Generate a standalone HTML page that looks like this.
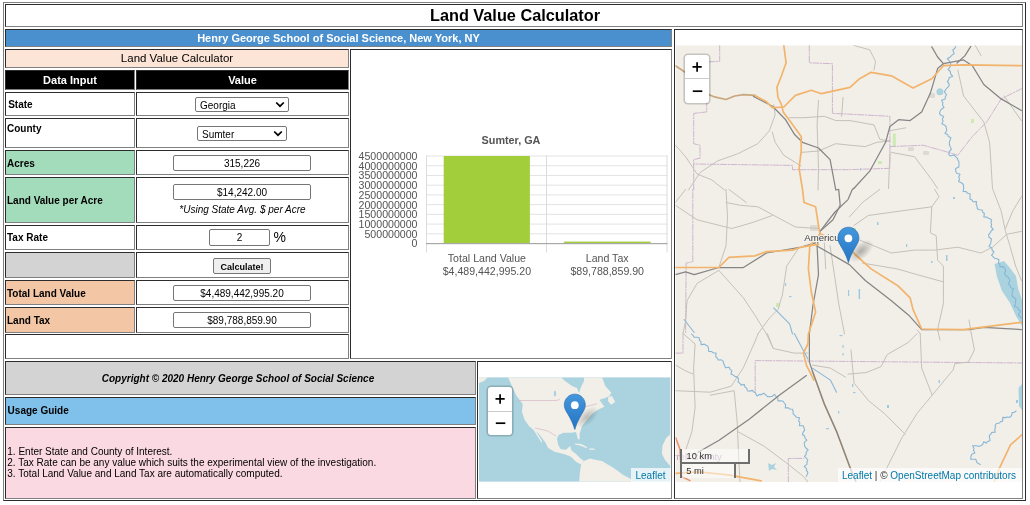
<!DOCTYPE html>
<html><head><meta charset="utf-8">
<style>
html,body{margin:0;padding:0;background:#fff;width:1030px;height:505px;overflow:hidden;}
body{font-family:"Liberation Sans",sans-serif;position:relative;color:#000;}
.a{position:absolute;box-sizing:border-box;}
.c{position:absolute;box-sizing:border-box;border:1px inset grey;}
.t{position:absolute;white-space:nowrap;line-height:1;}
.inp{position:absolute;box-sizing:border-box;border:1px solid #767676;border-radius:2px;background:#fff;}
</style></head><body><div id="wrap" style="position:absolute;left:0;top:0;width:1030px;height:505px;filter:blur(0.3px)">
<!-- outer table -->
<div class="a" style="left:3px;top:2px;width:1023px;height:499px;border:1px outset grey;"></div>

<!-- title -->
<div class="c" style="left:5px;top:4px;width:1018px;height:23px;"></div>
<div class="t" style="left:0;width:1030px;text-align:center;top:7px;font-weight:bold;font-size:16.3px;">Land Value Calculator</div>

<!-- blue header -->
<div class="c" style="left:5px;top:29px;width:667px;height:18px;background:#4a8fce;"></div>
<div class="t" style="left:5px;width:667px;text-align:center;top:33.2px;font-weight:bold;font-size:11px;color:#fff;">Henry George School of Social Science, New York, NY</div>

<!-- map cell -->
<div class="c" style="left:674px;top:29px;width:349px;height:470px;"></div>

<!-- peach -->
<div class="c" style="left:5px;top:49px;width:344px;height:19px;background:#fce4d6;"></div>
<div class="t" style="left:5px;width:344px;text-align:center;top:52.6px;font-size:11.5px;">Land Value Calculator</div>

<!-- chart cell -->
<div class="c" style="left:350px;top:49px;width:322px;height:310px;"></div>

<!-- black header -->
<div class="c" style="left:5px;top:70px;width:130px;height:20px;background:#000;"></div>
<div class="c" style="left:136px;top:70px;width:213px;height:20px;background:#000;"></div>
<div class="t" style="left:5px;width:130px;text-align:center;top:75.0px;font-weight:bold;font-size:11px;color:#fff;">Data Input</div>
<div class="t" style="left:136px;width:213px;text-align:center;top:75.0px;font-weight:bold;font-size:11px;color:#fff;">Value</div>

<!-- rows -->
<div class="c" style="left:5px;top:92px;width:130px;height:24px;"></div>
<div class="c" style="left:136px;top:92px;width:213px;height:24px;"></div>
<div class="t" style="left:8.2px;top:99.6px;font-weight:bold;font-size:10px;">State</div>

<div class="c" style="left:5px;top:118px;width:130px;height:30px;"></div>
<div class="c" style="left:136px;top:118px;width:213px;height:30px;"></div>
<div class="t" style="left:7px;top:124.1px;font-weight:bold;font-size:10px;">County</div>

<div class="c" style="left:5px;top:150px;width:130px;height:25px;background:#a3dcbb;"></div>
<div class="c" style="left:136px;top:150px;width:213px;height:25px;"></div>
<div class="t" style="left:7px;top:158.5px;font-weight:bold;font-size:10px;">Acres</div>

<div class="c" style="left:5px;top:177px;width:130px;height:46px;background:#a3dcbb;"></div>
<div class="c" style="left:136px;top:177px;width:213px;height:46px;"></div>
<div class="t" style="left:7px;top:195.8px;font-weight:bold;font-size:10px;">Land Value per Acre</div>

<div class="c" style="left:5px;top:225px;width:130px;height:25px;"></div>
<div class="c" style="left:136px;top:225px;width:213px;height:25px;"></div>
<div class="t" style="left:7px;top:233.3px;font-weight:bold;font-size:10px;">Tax Rate</div>

<div class="c" style="left:5px;top:252px;width:130px;height:26px;background:#d3d3d3;"></div>
<div class="c" style="left:136px;top:252px;width:213px;height:26px;"></div>

<div class="c" style="left:5px;top:280px;width:130px;height:25px;background:#f3c6a5;"></div>
<div class="c" style="left:136px;top:280px;width:213px;height:25px;"></div>
<div class="t" style="left:7px;top:288.6px;font-weight:bold;font-size:10px;">Total Land Value</div>

<div class="c" style="left:5px;top:307px;width:130px;height:26px;background:#f3c6a5;"></div>
<div class="c" style="left:136px;top:307px;width:213px;height:26px;"></div>
<div class="t" style="left:7px;top:315.9px;font-weight:bold;font-size:10px;">Land Tax</div>

<div class="c" style="left:5px;top:334px;width:344px;height:25px;"></div>


<!-- chart -->
<svg class="a" style="left:0;top:0" width="1030" height="505" viewBox="0 0 1030 505">
<rect x="426" y="155.50" width="241.5" height="1" fill="#e3e3e3"/>
<rect x="426" y="165.22" width="241.5" height="1" fill="#e3e3e3"/>
<rect x="426" y="174.94" width="241.5" height="1" fill="#e3e3e3"/>
<rect x="426" y="184.67" width="241.5" height="1" fill="#e3e3e3"/>
<rect x="426" y="194.39" width="241.5" height="1" fill="#e3e3e3"/>
<rect x="426" y="204.11" width="241.5" height="1" fill="#e3e3e3"/>
<rect x="426" y="213.83" width="241.5" height="1" fill="#e3e3e3"/>
<rect x="426" y="223.56" width="241.5" height="1" fill="#e3e3e3"/>
<rect x="426" y="233.28" width="241.5" height="1" fill="#e3e3e3"/>
<rect x="426.0" y="155.5" width="1" height="97" fill="#dcdcdc"/>
<rect x="546.0" y="155.5" width="1" height="97" fill="#dcdcdc"/>
<rect x="666.5" y="155.5" width="1" height="97" fill="#dcdcdc"/>
<rect x="443.7" y="156" width="86.2" height="87.5" fill="#a1ce3a"/>
<rect x="563.9" y="241.6" width="86.7" height="1.9" fill="#a1ce3a"/>
<rect x="426" y="243.00" width="241.5" height="1.2" fill="#a8a8a8"/>
<text x="417.5" y="159.90" text-anchor="end" font-family="Liberation Sans" font-size="10.6" fill="#545454">4500000000</text>
<text x="417.5" y="169.62" text-anchor="end" font-family="Liberation Sans" font-size="10.6" fill="#545454">4000000000</text>
<text x="417.5" y="179.34" text-anchor="end" font-family="Liberation Sans" font-size="10.6" fill="#545454">3500000000</text>
<text x="417.5" y="189.07" text-anchor="end" font-family="Liberation Sans" font-size="10.6" fill="#545454">3000000000</text>
<text x="417.5" y="198.79" text-anchor="end" font-family="Liberation Sans" font-size="10.6" fill="#545454">2500000000</text>
<text x="417.5" y="208.51" text-anchor="end" font-family="Liberation Sans" font-size="10.6" fill="#545454">2000000000</text>
<text x="417.5" y="218.23" text-anchor="end" font-family="Liberation Sans" font-size="10.6" fill="#545454">1500000000</text>
<text x="417.5" y="227.96" text-anchor="end" font-family="Liberation Sans" font-size="10.6" fill="#545454">1000000000</text>
<text x="417.5" y="237.68" text-anchor="end" font-family="Liberation Sans" font-size="10.6" fill="#545454">500000000</text>
<text x="417.5" y="247.40" text-anchor="end" font-family="Liberation Sans" font-size="10.6" fill="#545454">0</text>
<text x="511" y="143.8" text-anchor="middle" font-family="Liberation Sans" font-weight="bold" font-size="10.8" fill="#545454">Sumter, GA</text>
<text x="486.9" y="261.8" text-anchor="middle" font-family="Liberation Sans" font-size="10.6" fill="#545454">Total Land Value</text>
<text x="486.9" y="274.7" text-anchor="middle" font-family="Liberation Sans" font-size="10.6" fill="#545454">$4,489,442,995.20</text>
<text x="607.2" y="261.8" text-anchor="middle" font-family="Liberation Sans" font-size="10.6" fill="#545454">Land Tax</text>
<text x="607.2" y="274.7" text-anchor="middle" font-family="Liberation Sans" font-size="10.6" fill="#545454">$89,788,859.90</text>
</svg>
<!-- controls -->
<div class="inp" style="left:195px;top:97px;width:94px;height:15px;"></div>
<div class="t" style="left:200px;top:100.9px;font-size:10px;">Georgia</div>
<svg class="a" style="left:275px;top:101px;" width="10" height="7" viewBox="0 0 10 7"><polyline points="1.2,1.5 5,5.2 8.8,1.5" fill="none" stroke="#000" stroke-width="1.7"/></svg>
<div class="inp" style="left:197px;top:126px;width:90px;height:15px;"></div>
<div class="t" style="left:202px;top:129.9px;font-size:10px;">Sumter</div>
<svg class="a" style="left:273px;top:130px;" width="10" height="7" viewBox="0 0 10 7"><polyline points="1.2,1.5 5,5.2 8.8,1.5" fill="none" stroke="#000" stroke-width="1.7"/></svg>

<div class="inp" style="left:173px;top:155px;width:138px;height:16px;"></div>
<div class="t" style="left:173px;width:138px;text-align:center;top:158.8px;font-size:10px;">315,226</div>
<div class="inp" style="left:173px;top:184px;width:138px;height:16px;"></div>
<div class="t" style="left:173px;width:138px;text-align:center;top:187.8px;font-size:10px;">$14,242.00</div>
<div class="t" style="left:136px;width:213px;text-align:center;top:204.8px;font-size:10px;font-style:italic;">*Using State Avg. $ per Acre</div>

<div class="inp" style="left:209px;top:229px;width:61px;height:17px;"></div>
<div class="t" style="left:209px;width:61px;text-align:center;top:233.2px;font-size:10px;">2</div>
<div class="t" style="left:273.6px;top:230.2px;font-size:14px;">%</div>

<div class="a" style="left:213px;top:258px;width:58px;height:16px;border:1px solid #767676;border-radius:2px;background:#efefef;"></div>
<div class="t" style="left:213px;width:58px;text-align:center;top:262.5px;font-size:9px;font-weight:bold;">Calculate!</div>

<div class="inp" style="left:173px;top:285px;width:138px;height:16px;"></div>
<div class="t" style="left:173px;width:138px;text-align:center;top:289.3px;font-size:10px;">$4,489,442,995.20</div>
<div class="inp" style="left:173px;top:312px;width:138px;height:16px;"></div>
<div class="t" style="left:173px;width:138px;text-align:center;top:316.1px;font-size:10px;">$89,788,859.90</div>





















<!-- bigmap -->
<svg class="a" style="left:0;top:0" width="1030" height="505" viewBox="0 0 1030 505">
<defs><clipPath id="bmc"><rect x="675.5" y="45.3" width="346.5" height="436.7"/></clipPath><radialGradient id="shd" cx="0.5" cy="0.5" r="0.5"><stop offset="0" stop-color="#000" stop-opacity="0.28"/><stop offset="1" stop-color="#000" stop-opacity="0"/></radialGradient><linearGradient id="mk" x1="0" y1="0" x2="0" y2="1"><stop offset="0" stop-color="#4597dc"/><stop offset="1" stop-color="#2374c4"/></linearGradient></defs>
<g clip-path="url(#bmc)">
<rect x="675.5" y="45.3" width="346.5" height="436.7" fill="#f2efe9"/>
<polygon points="994.5,264 1004,261 1010,268 1016,276 1018,288 1022,300 1022,326 1016,316 1010,303 1002,291 997,277" fill="#aad3df"/>
<polygon points="1018.5,388 1022,384 1022,410 1019,406" fill="#aad3df"/>
<rect x="929" y="93" width="6" height="5" fill="#ddd9d3" rx="1"/>
<rect x="908" y="147" width="6" height="4" fill="#ddd9d3" rx="1"/>
<rect x="923" y="151" width="6" height="4" fill="#ddd9d3" rx="1"/>
<rect x="810" y="225" width="8" height="6" fill="#ddd9d3" rx="1"/>
<rect x="892.8" y="133.6" width="3" height="13" fill="#cdebb0"/>
<rect x="971" y="119" width="3" height="4" fill="#cdebb0"/>
<rect x="878" y="161" width="4" height="3" fill="#cdebb0"/>
<rect x="776" y="303" width="4" height="4" fill="#cdebb0"/>
<rect x="851" y="228" width="5" height="7" fill="#cdebb0"/>
<circle cx="939.9" cy="91.7" r="3.5" fill="#aad3df"/>
<rect x="839.5" y="335" width="3" height="1.2" fill="#9ecae0"/>
<rect x="842.5" y="345" width="1.2" height="3" fill="#9ecae0"/>
<rect x="842.5" y="353" width="1.2" height="2.5" fill="#9ecae0"/>
<rect x="852" y="384" width="1.3" height="3" fill="#9ecae0"/>
<rect x="853" y="392" width="2.5" height="1.2" fill="#9ecae0"/>
<rect x="826" y="428" width="3" height="1.2" fill="#9ecae0"/>
<rect x="838" y="411" width="1.3" height="2.5" fill="#9ecae0"/>
<rect x="887" y="405" width="2" height="3" fill="#9ecae0"/>
<rect x="938.5" y="380" width="1.5" height="3" fill="#9ecae0"/>
<rect x="1016" y="400" width="2" height="3" fill="#9ecae0"/>
<rect x="785" y="283" width="1.2" height="3" fill="#9ecae0"/>
<rect x="789" y="296" width="2.5" height="1.2" fill="#9ecae0"/>
<rect x="848" y="290" width="1.2" height="6" fill="#9ecae0"/>
<rect x="858.6" y="289" width="1.5" height="10" fill="#9ecae0"/>
<rect x="946" y="255" width="1.5" height="6" fill="#9ecae0"/>
<rect x="877" y="222" width="1.5" height="3" fill="#9ecae0"/>
<rect x="953" y="197" width="2" height="2" fill="#9ecae0"/>
<rect x="906" y="244" width="1.2" height="3" fill="#9ecae0"/>
<rect x="931" y="261" width="1.5" height="2" fill="#9ecae0"/>
<rect x="860" y="168" width="1.2" height="2.5" fill="#9ecae0"/>
<rect x="801" y="137" width="1.2" height="2.5" fill="#9ecae0"/>
<path d="M768,463 l4,2 l4,-2 l-2,4 l3,3 l-5,-1 l-3,2 z" fill="#aad3df"/>
<text x="668" y="459.5" font-family="Liberation Sans" font-size="9.5" fill="#b79bbd">errell County</text>
<polyline points="719.7,45.4 719.7,61.3 708.7,61.9" fill="none" stroke="#cdb5cd" stroke-width="1.0" stroke-linejoin="round" stroke-linecap="round" stroke-dasharray="6,1.5,1.5,1.5"/>
<polyline points="706.7,100.4 706.7,111.9 693.7,113.4 693.7,143.7 700.0,145.2 700.0,158.2 693.7,159.6 693.7,190.0 692.8,189.4 692.8,261.7 686.1,263.1 685.6,334.0" fill="none" stroke="#cdb5cd" stroke-width="1.0" stroke-linejoin="round" stroke-linecap="round" stroke-dasharray="6,1.5,1.5,1.5"/>
<polyline points="809.3,45.4 809.3,62.8 832.4,63.7 832.4,113.4 850.0,114.2 889.9,116.3 889.9,168.3 848.0,169.7 792.5,169.7 792.5,165.4 693.7,164.0" fill="none" stroke="#cdb5cd" stroke-width="1.0" stroke-linejoin="round" stroke-linecap="round" stroke-dasharray="6,1.5,1.5,1.5"/>
<polyline points="889.9,146.6 923.1,145.2 943.4,150.9 957.8,155.3 972.3,136.5 986.7,122.0 1001.2,98.9 1021.4,88.8" fill="none" stroke="#cdb5cd" stroke-width="1.0" stroke-linejoin="round" stroke-linecap="round" stroke-dasharray="6,1.5,1.5,1.5"/>
<polyline points="683.0,333.5 683.0,353.1 675.5,353.1" fill="none" stroke="#cdb5cd" stroke-width="1.0" stroke-linejoin="round" stroke-linecap="round" stroke-dasharray="6,1.5,1.5,1.5"/>
<polyline points="755.2,392.2 755.2,360.6 1022.5,363.0" fill="none" stroke="#cdb5cd" stroke-width="1.0" stroke-linejoin="round" stroke-linecap="round" stroke-dasharray="6,1.5,1.5,1.5"/>
<polyline points="788.3,482.4 788.3,458.4 803.4,458.4" fill="none" stroke="#cdb5cd" stroke-width="1.0" stroke-linejoin="round" stroke-linecap="round" stroke-dasharray="6,1.5,1.5,1.5"/>
<polyline points="773.7,104.7 775.2,114.8 769.4,130.7 757.8,143.7 737.6,153.8 717.4,161.0 700.0,172.6 688.5,190.0" fill="none" stroke="#c4c0ba" stroke-width="1.0" stroke-linejoin="round" stroke-linecap="round" />
<polyline points="772.3,132.2 775.2,142.3 783.8,155.3 795.4,162.5 801.0,166.0" fill="none" stroke="#c4c0ba" stroke-width="1.0" stroke-linejoin="round" stroke-linecap="round" />
<polyline points="789.6,117.7 804.0,117.7 824.3,116.3 835.8,120.6 850.0,120.6 874.0,124.9 879.8,139.4 889.9,141.0" fill="none" stroke="#c4c0ba" stroke-width="1.0" stroke-linejoin="round" stroke-linecap="round" />
<polyline points="801.2,152.4 818.5,151.0 835.8,143.7 850.0,145.2 865.3,146.6 876.9,142.3 889.9,141.0" fill="none" stroke="#c4c0ba" stroke-width="1.0" stroke-linejoin="round" stroke-linecap="round" />
<polyline points="818.5,100.4 817.1,124.9 818.5,168.3 818.0,190.0" fill="none" stroke="#c4c0ba" stroke-width="1.0" stroke-linejoin="round" stroke-linecap="round" />
<polyline points="843.1,97.5 841.6,116.3" fill="none" stroke="#c4c0ba" stroke-width="1.0" stroke-linejoin="round" stroke-linecap="round" />
<polyline points="675.4,145.2 685.6,156.7 697.1,174.0 711.6,179.8 724.6,190.0" fill="none" stroke="#c4c0ba" stroke-width="1.0" stroke-linejoin="round" stroke-linecap="round" />
<polyline points="853.8,45.4 869.7,49.8 875.5,61.3 874.0,70.0" fill="none" stroke="#c4c0ba" stroke-width="1.0" stroke-linejoin="round" stroke-linecap="round" />
<polyline points="975.2,45.4 981.0,55.6" fill="none" stroke="#c4c0ba" stroke-width="1.0" stroke-linejoin="round" stroke-linecap="round" />
<polyline points="957.8,70.0 963.6,96.0 983.8,122.0 989.6,142.3 992.5,188.5 1001.2,211.1 1005.5,231.4 1009.9,245.8 1015.6,266.0 1021.4,280.5" fill="none" stroke="#c4c0ba" stroke-width="1.0" stroke-linejoin="round" stroke-linecap="round" />
<polyline points="889.9,130.7 905.8,127.8" fill="none" stroke="#c4c0ba" stroke-width="1.0" stroke-linejoin="round" stroke-linecap="round" />
<polyline points="888.5,188.5 889.9,153.8 891.4,152.4 914.5,156.7 931.8,179.8 937.6,188.5" fill="none" stroke="#c4c0ba" stroke-width="1.0" stroke-linejoin="round" stroke-linecap="round" />
<polyline points="1004.0,96.0 1021.4,120.6" fill="none" stroke="#c4c0ba" stroke-width="1.0" stroke-linejoin="round" stroke-linecap="round" />
<polyline points="726.0,189.4 727.5,216.9 726.0,245.8 718.8,267.5" fill="none" stroke="#c4c0ba" stroke-width="1.0" stroke-linejoin="round" stroke-linecap="round" />
<polyline points="675.4,205.3 697.1,219.8 731.8,228.5 752.0,222.7 772.3,215.5" fill="none" stroke="#c4c0ba" stroke-width="1.0" stroke-linejoin="round" stroke-linecap="round" />
<polyline points="726.0,202.5 740.5,205.3 757.8,206.8 795.4,227.0 818.5,228.5" fill="none" stroke="#c4c0ba" stroke-width="1.0" stroke-linejoin="round" stroke-linecap="round" />
<polyline points="728.9,189.4 746.3,202.5" fill="none" stroke="#c4c0ba" stroke-width="1.0" stroke-linejoin="round" stroke-linecap="round" />
<polyline points="718.8,270.4 743.4,297.8 754.9,315.2 766.5,334.0 773.3,348.5" fill="none" stroke="#c4c0ba" stroke-width="1.0" stroke-linejoin="round" stroke-linecap="round" />
<polyline points="718.8,270.4 697.1,283.4 687.0,300.7 685.6,321.0 683.0,333.5 695.1,344.0 693.6,368.1 695.1,407.2 692.0,431.3 686.0,449.3" fill="none" stroke="#c4c0ba" stroke-width="1.0" stroke-linejoin="round" stroke-linecap="round" />
<polyline points="798.3,248.7 786.7,266.0 782.4,294.9 778.0,309.4 769.4,318.1 757.8,334.0" fill="none" stroke="#c4c0ba" stroke-width="1.0" stroke-linejoin="round" stroke-linecap="round" />
<polyline points="830.1,245.8 834.4,274.7 838.7,303.6 844.5,334.0" fill="none" stroke="#c4c0ba" stroke-width="1.0" stroke-linejoin="round" stroke-linecap="round" />
<polyline points="824.3,242.9 825.7,268.9" fill="none" stroke="#c4c0ba" stroke-width="1.0" stroke-linejoin="round" stroke-linecap="round" />
<polyline points="685.6,189.4 675.4,202.5" fill="none" stroke="#c4c0ba" stroke-width="1.0" stroke-linejoin="round" stroke-linecap="round" />
<polyline points="859.6,240.0 891.4,253.0 914.5,250.1 934.7,250.1 957.8,247.2 981.0,253.0 992.5,247.2 1007.0,234.2 1021.4,231.4" fill="none" stroke="#c4c0ba" stroke-width="1.0" stroke-linejoin="round" stroke-linecap="round" />
<polyline points="934.7,189.4 939.0,196.7 931.8,206.8 930.4,232.8 936.2,235.7 937.6,260.3 943.4,266.0 943.4,303.6 937.6,329.6" fill="none" stroke="#c4c0ba" stroke-width="1.0" stroke-linejoin="round" stroke-linecap="round" />
<polyline points="853.8,225.6 868.2,215.5 900.0,211.1 931.8,206.8" fill="none" stroke="#c4c0ba" stroke-width="1.0" stroke-linejoin="round" stroke-linecap="round" />
<polyline points="862.5,263.1 897.1,268.9 917.4,274.7 943.4,281.9" fill="none" stroke="#c4c0ba" stroke-width="1.0" stroke-linejoin="round" stroke-linecap="round" />
<polyline points="1021.4,196.7 1012.7,211.1 1005.5,228.5" fill="none" stroke="#c4c0ba" stroke-width="1.0" stroke-linejoin="round" stroke-linecap="round" />
<polyline points="849.4,216.9 862.5,202.5 879.8,189.4" fill="none" stroke="#c4c0ba" stroke-width="1.0" stroke-linejoin="round" stroke-linecap="round" />
<polyline points="675.5,365.1 686.0,371.1 693.0,374.0" fill="none" stroke="#c4c0ba" stroke-width="1.0" stroke-linejoin="round" stroke-linecap="round" />
<polyline points="675.5,390.7 710.1,392.2 731.2,386.2 743.2,368.1 755.2,341.0 758.2,333.5" fill="none" stroke="#c4c0ba" stroke-width="1.0" stroke-linejoin="round" stroke-linecap="round" />
<polyline points="710.1,395.2 734.2,390.7 737.2,422.3 738.7,458.4 740.0,482.0" fill="none" stroke="#c4c0ba" stroke-width="1.0" stroke-linejoin="round" stroke-linecap="round" />
<polyline points="767.3,333.5 773.3,348.5 794.3,353.1 807.9,353.1" fill="none" stroke="#c4c0ba" stroke-width="1.0" stroke-linejoin="round" stroke-linecap="round" />
<polyline points="737.2,431.3 764.3,446.3 788.3,464.4 803.4,476.4 808.0,482.0" fill="none" stroke="#c4c0ba" stroke-width="1.0" stroke-linejoin="round" stroke-linecap="round" />
<polyline points="812.4,365.1 830.4,368.1 845.5,377.1" fill="none" stroke="#c4c0ba" stroke-width="1.0" stroke-linejoin="round" stroke-linecap="round" />
<polyline points="917.2,333.5 908.2,342.5 887.1,354.6 881.1,366.6 866.0,372.6 848.0,374.1" fill="none" stroke="#c4c0ba" stroke-width="1.0" stroke-linejoin="round" stroke-linecap="round" />
<polyline points="920.2,333.5 921.7,368.1 932.2,395.2 917.2,413.2 902.2,437.3 887.1,467.4 880.0,482.0" fill="none" stroke="#c4c0ba" stroke-width="1.0" stroke-linejoin="round" stroke-linecap="round" />
<polyline points="851.0,350.0 854.0,383.1 869.1,401.2 884.1,413.2 905.2,434.3" fill="none" stroke="#c4c0ba" stroke-width="1.0" stroke-linejoin="round" stroke-linecap="round" />
<polyline points="971.3,333.5 974.4,350.0 968.3,362.1 954.8,363.6 953.3,369.6 932.2,395.2" fill="none" stroke="#c4c0ba" stroke-width="1.0" stroke-linejoin="round" stroke-linecap="round" />
<polyline points="920.2,333.5 917.2,330.0" fill="none" stroke="#c4c0ba" stroke-width="1.0" stroke-linejoin="round" stroke-linecap="round" />
<polyline points="971.3,333.5 969.0,320.0" fill="none" stroke="#c4c0ba" stroke-width="1.0" stroke-linejoin="round" stroke-linecap="round" />
<polyline points="937.6,329.6 940.0,340.0" fill="none" stroke="#c4c0ba" stroke-width="1.0" stroke-linejoin="round" stroke-linecap="round" />
<polyline points="955.7,46.5 954.7,48.5 952.8,50.0 954.2,53.6 952.1,55.0 950.6,56.7 947.3,58.7 949.1,60.7 950.5,62.7 950.8,64.9 950.0,67.1 948.1,69.5 950.3,71.5 950.6,73.6 952.6,76.4 949.1,77.6 948.8,79.7 947.4,81.6 949.3,84.4 948.7,86.4 946.9,88.1 945.4,90.0 944.4,92.0 946.5,94.7 945.3,96.7 945.2,98.9 941.6,100.2 942.9,102.8 942.5,104.9 944.0,107.5 941.5,109.2 940.1,111.0 939.5,113.7 941.1,115.3 943.7,116.6 942.3,119.2 943.1,121.1 941.8,123.7 944.4,124.9 946.1,126.5 946.4,128.5 946.8,130.5 945.0,133.4 947.7,134.6 948.4,136.5 950.9,137.8 950.1,140.3 949.4,142.1 949.4,144.5 950.3,146.9 951.4,149.4 949.2,151.5 948.7,154.6 950.6,156.0 954.0,154.9 955.6,156.7 957.4,158.3 957.4,159.1 959.0,162.0 958.9,164.4 958.8,166.9 955.6,168.5 955.7,171.5 956.8,173.3 960.0,174.2 958.7,177.0 959.5,178.9 958.7,181.5 961.3,182.7 963.2,184.2 963.5,186.3 963.8,188.4 963.1,191.4 966.2,191.6 967.4,193.2 970.0,193.8 970.1,196.2 969.9,198.9 971.9,199.9 973.0,201.7 976.5,201.6 976.2,204.4 977.1,206.3 977.3,208.7 979.3,209.8 982.1,210.0 982.8,212.2 984.4,213.5 983.8,216.9 986.5,217.1 988.4,218.2 990.6,218.9 991.7,220.6 990.9,222.4 991.6,224.7 990.9,226.7 993.3,229.3 991.1,231.0 990.2,232.9 988.6,234.8 989.0,237.2 991.5,239.0 990.9,241.4 990.8,243.6 988.9,246.2 991.9,247.9 992.1,250.1 994.0,252.0 991.5,255.3 993.1,256.6 994.4,258.2 997.0,258.7 999.0,259.8 998.4,262.9 999.8,264.4 1000.0,266.9 1003.6,266.6 1004.9,268.5 1005.6,270.7 1004.5,273.5 1005.5,275.5 1007.9,277.0 1009.3,278.8 1009.8,281.0 1008.3,283.9 1010.1,285.5 1010.6,287.6 1013.7,288.9 1012.1,291.5 1012.4,293.6 1011.8,296.0 1013.9,297.5 1016.0,299.1 1015.4,301.5 1015.7,303.5 1014.4,306.5 1017.8,307.5 1018.5,309.7 1020.6,311.2 1018.4,314.5 1020.0,316.3 1021.4,318.1" fill="none" stroke="#88b7d6" stroke-width="1.1" stroke-linejoin="round" stroke-linecap="round" />
<polyline points="691.5,334.1 693.1,335.4 694.1,337.3 696.9,337.3 699.2,337.7 699.5,340.4 701.0,341.8 701.1,344.7 704.4,344.1 706.1,345.3 707.9,346.3 708.5,348.7 708.7,351.4 711.6,351.5 713.2,352.9 716.1,353.0 715.6,356.6 717.2,358.0 718.2,360.0 721.3,359.9 723.2,361.1 723.6,363.6 724.7,365.6 725.4,367.8 729.2,367.3 730.0,369.4 731.9,370.6 730.9,374.1 733.1,375.1 735.0,376.4 737.5,377.1 738.5,379.0 738.1,382.1 739.9,383.3 741.2,385.1 744.3,384.4 745.0,387.1 746.7,388.3 747.5,390.8 749.7,391.1 752.5,390.4 753.8,392.1 755.3,392.7 757.0,396.0 759.4,394.6 761.5,394.6 763.9,393.2 765.8,394.8 767.7,396.8 769.9,396.6 772.0,396.5 774.5,394.3 776.2,396.8 777.8,398.1 778.0,400.9 780.8,400.8 783.1,401.3 784.3,403.0 785.6,404.6 785.3,407.9 788.3,407.7 789.8,409.0 792.5,409.2 793.1,411.5 793.1,413.9 794.9,415.4 796.3,417.2 799.5,417.8 798.6,420.9 799.8,422.7 799.4,425.6 803.2,425.8 804.1,428.2 804.7,430.2 803.0,432.4 802.5,434.5 804.8,436.3 805.0,438.3 806.9,440.1 804.3,442.4 804.4,444.4 804.8,446.4 806.1,448.3 808.2,450.0 806.1,452.3 806.2,454.3 804.5,456.3 806.5,458.3 807.8,460.3 807.0,462.3 806.9,464.4 804.2,466.4 806.3,468.4 806.6,470.4 807.9,472.4 807.2,474.4 806.4,476.4" fill="none" stroke="#88b7d6" stroke-width="1.1" stroke-linejoin="round" stroke-linecap="round" />
<polyline points="794.3,333.5 807.9,359.1" fill="none" stroke="#88b7d6" stroke-width="1.1" stroke-linejoin="round" stroke-linecap="round" />
<polyline points="812.4,368.1 830.4,380.1 836.5,392.2" fill="none" stroke="#88b7d6" stroke-width="1.1" stroke-linejoin="round" stroke-linecap="round" />
<polyline points="773.7,307.9 789.6,323.8 792.5,334.0" fill="none" stroke="#88b7d6" stroke-width="1.1" stroke-linejoin="round" stroke-linecap="round" />
<polyline points="684.1,319.5 694.2,332.5" fill="none" stroke="#88b7d6" stroke-width="1.1" stroke-linejoin="round" stroke-linecap="round" />
<polyline points="1016.1,411.0 1014.4,412.2 1012.2,412.6 1011.5,415.6 1010.0,417.2 1007.5,417.0 1005.4,417.6 1002.8,417.4 1002.6,421.1 1000.5,421.7 999.6,423.0 996.4,423.5 995.2,425.1 995.4,427.6 994.7,429.5 995.2,432.1 991.7,432.4 990.8,434.2 989.3,435.7 989.7,438.2 990.0,440.7 987.3,441.5 986.4,443.3 983.9,441.7 982.5,444.7 980.6,445.7 978.7,446.4 976.4,445.8 972.5,445.8 974.0,448.3 973.4,450.3 974.9,452.9 971.8,454.2 971.0,456.2 970.7,459.3 973.3,459.3 975.9,459.3 976.7,462.1 978.3,463.6 980.4,464.4" fill="none" stroke="#88b7d6" stroke-width="1.1" stroke-linejoin="round" stroke-linecap="round" />
<polyline points="812.4,371.1 824.4,404.2 836.5,431.3 850.0,467.4 856.0,482.0" fill="none" stroke="#c9a77c" stroke-width="1.6" stroke-linejoin="round" stroke-linecap="round" />
<polyline points="675.4,65.7 684.1,71.5 708.7,94.6 714.5,96.9 726.0,99.5 734.7,96.0 743.4,94.6 754.9,95.4" fill="none" stroke="#c9a77c" stroke-width="1.6" stroke-linejoin="round" stroke-linecap="round" />
<polyline points="753.5,96.4 772.5,106.2 785.2,119.2 794.8,134.8 802.5,142.3 818.5,148.0 830.1,159.6 835.8,190.0 838.7,189.4 840.2,205.3 833.0,219.8 820.0,231.4 817.1,245.8 818.5,274.7 813.0,305.0 809.4,333.5" fill="none" stroke="#858585" stroke-width="1.25" stroke-linejoin="round" stroke-linecap="round" />
<polyline points="853.8,188.5 869.7,171.2 885.6,142.3 889.9,126.4 898.6,119.7 910.1,120.6 921.7,111.9 930.4,93.1 937.6,68.6 943.4,63.7 963.6,59.9 972.3,65.7 983.8,84.5 1001.2,98.9 1021.4,110.5" fill="none" stroke="#858585" stroke-width="1.25" stroke-linejoin="round" stroke-linecap="round" />
<polyline points="931.8,46.9 937.6,57.0 943.4,63.7" fill="none" stroke="#858585" stroke-width="1.25" stroke-linejoin="round" stroke-linecap="round" />
<polyline points="970.8,46.3 965.0,55.6 957.0,63.0" fill="none" stroke="#858585" stroke-width="1.25" stroke-linejoin="round" stroke-linecap="round" />
<polyline points="853.8,188.5 852.3,189.4 848.0,199.6 835.0,212.0 820.0,231.4" fill="none" stroke="#858585" stroke-width="1.25" stroke-linejoin="round" stroke-linecap="round" />
<polyline points="675.4,274.7 685.6,271.8 694.2,274.7 718.8,267.5 743.4,267.5 766.5,253.0 801.2,247.2 815.6,242.9" fill="none" stroke="#858585" stroke-width="1.25" stroke-linejoin="round" stroke-linecap="round" />
<polyline points="817.0,246.0 849.4,264.6 865.3,280.5 891.4,300.7 908.7,315.2 921.7,329.6 969.4,329.6 983.8,327.3 1021.4,329.6" fill="none" stroke="#858585" stroke-width="1.25" stroke-linejoin="round" stroke-linecap="round" />
<polyline points="809.4,333.5 809.4,362.1 812.4,371.1 824.4,404.2 836.5,431.3 850.0,467.4 856.0,482.0" fill="none" stroke="#858585" stroke-width="1.25" stroke-linejoin="round" stroke-linecap="round" />
<polyline points="806.4,375.6 779.3,395.2 749.2,419.2 719.1,440.3 698.1,452.3" fill="none" stroke="#858585" stroke-width="1.25" stroke-linejoin="round" stroke-linecap="round" />
<polyline points="783.8,45.4 786.1,62.8 781.5,75.8 776.9,87.4 778.0,97.5 781.5,104.7 783.2,111.9 789.6,120.6 801.2,136.5 801.2,150.9 799.1,168.3 802.6,190.0 804.0,202.5 815.6,206.8 818.5,225.6 820.0,234.2 809.8,245.8 808.4,268.9 811.3,292.0 815.6,312.3 808.4,334.0 807.9,344.0 803.4,353.1 806.4,365.1 813.9,380.1" fill="none" stroke="#f2b46c" stroke-width="1.7" stroke-linejoin="round" stroke-linecap="round" />
<polyline points="754.9,95.4 766.5,101.8 772.3,107.6 783.8,107.0 795.4,95.4 811.3,90.2 821.4,93.7 850.0,87.4 859.6,78.7 871.1,72.3 891.4,75.8 913.0,87.9 931.8,78.7 943.4,65.7 963.6,64.8 1021.4,65.7" fill="none" stroke="#f2b46c" stroke-width="1.7" stroke-linejoin="round" stroke-linecap="round" />
<polyline points="675.4,267.5 718.8,267.5 728.9,257.4 754.9,255.9 766.5,251.6 792.5,250.1 801.2,247.2 818.5,244.4" fill="none" stroke="#f2b46c" stroke-width="1.7" stroke-linejoin="round" stroke-linecap="round" />
<polyline points="820.0,234.0 838.0,240.0 848.0,247.0 855.2,254.5 871.1,268.9 898.6,286.3 910.1,297.8 913.0,309.4 921.7,329.0 963.6,329.6 986.7,326.7 1021.4,322.4" fill="none" stroke="#f2b46c" stroke-width="1.7" stroke-linejoin="round" stroke-linecap="round" />
<polyline points="675.5,473.4 698.1,471.9 728.2,474.9 761.2,480.9" fill="none" stroke="#f2b46c" stroke-width="1.7" stroke-linejoin="round" stroke-linecap="round" />
<polyline points="1022.5,434.3 1010.5,444.8 998.4,470.4 994.0,482.0" fill="none" stroke="#f2b46c" stroke-width="1.7" stroke-linejoin="round" stroke-linecap="round" />
<polyline points="675.5,437.3 680,449.3 681.5,476.4 690.5,480.9" fill="none" stroke="#e8926f" stroke-width="1.6"/>
<text x="804.3" y="240.5" font-family="Liberation Sans" font-size="9.6" fill="#404040" stroke="#f5f3ef" stroke-width="2" paint-order="stroke">Americus</text>
<ellipse cx="861" cy="251" rx="15" ry="8" fill="url(#shd)" transform="rotate(-40 861 251)"/>
<g transform="translate(837.4,226.7) scale(0.88)"><path d="M12.5,0.6 C5.8,0.6 0.6,6 0.6,12.8 C0.6,15.2 1.2,17.3 2.4,19.4 C5.5,25 10,31.5 12.5,40.8 C15,31.5 19.5,25 22.6,19.4 C23.8,17.3 24.4,15.2 24.4,12.8 C24.4,6 19.2,0.6 12.5,0.6 Z" fill="url(#mk)" stroke="#2a6fb0" stroke-width="0.8"/><circle cx="12.5" cy="13.2" r="4.4" fill="#fff"/></g>
</g>
</svg>
<!-- zoom control big -->
<div class="a" style="left:684.5px;top:54.5px;width:24px;height:48.6px;background:#fff;border-radius:3px;box-shadow:0 0 0 1.6px rgba(0,0,0,0.18);"></div>
<div class="a" style="left:684.5px;top:78.1px;width:24px;height:1px;background:#ccc;"></div>
<svg class="a" style="left:684.5px;top:54.5px" width="24" height="49" viewBox="0 0 24 49"><path d="M7.5 11.9H16.7M12.1 7.2V16.7" stroke="#000" stroke-width="1.7"/><path d="M7.8 36.2H17.3" stroke="#000" stroke-width="1.7"/></svg>
<!-- scale -->
<div class="a" style="left:680px;top:448.5px;width:70px;height:15.5px;background:rgba(255,255,255,0.5);border:2px solid #6e6e6e;border-top:none;"></div>
<div class="a" style="left:680px;top:462px;width:56px;height:16px;background:rgba(255,255,255,0.5);border:2px solid #6e6e6e;border-bottom:none;"></div>
<div class="t" style="left:686.6px;top:451.6px;font-size:9.3px;color:#333;">10 km</div>
<div class="t" style="left:686.3px;top:466.8px;font-size:9.3px;color:#333;">5 mi</div>
<!-- attribution -->
<div class="a" style="left:837.8px;top:467.6px;width:184.2px;height:14.4px;background:rgba(255,255,255,0.7);"></div>
<div class="t" style="left:842px;top:470.8px;font-size:10px;color:#333;"><span style="color:#0078a8">Leaflet</span> | © <span style="color:#0078a8">OpenStreetMap</span> <span style="color:#0078a8">contributors</span></div>
<svg class="a" style="left:0;top:0" width="1030" height="505" viewBox="0 0 1030 505">
<defs><clipPath id="smc"><rect x="478.8" y="377.2" width="191.8" height="104.60000000000002"/></clipPath><radialGradient id="shd2" cx="0.5" cy="0.5" r="0.5"><stop offset="0" stop-color="#000" stop-opacity="0.22"/><stop offset="1" stop-color="#000" stop-opacity="0"/></radialGradient></defs>
<g clip-path="url(#smc)">
<rect x="478.8" y="377.2" width="191.8" height="104.60000000000002" fill="#aad3df"/>
<polygon points="508,377.2 512,386 516,395 522.7,404 522,412 524.7,420 529.2,426.3 533.6,430.1 538,432.7 545.6,442.8 548.2,447.9 554.5,451.7 559.6,453 564.6,454.2 571,456.8 576,461.8 581.1,464.4 584,461 580,458 576,454 572,451 571,449.2 570.3,446 565.9,449.8 560.8,449.2 558.3,445.3 557,439 558.3,435.2 563.4,432.7 571,432.7 576,432 578,439.6 579.8,439 579.5,434 582,426 586.5,420.5 592.5,413.6 598.4,409.6 604.4,406.7 599.4,399.7 605,398 609.3,396.3 611.3,392.8 605.3,385.9 602,377.2 584,377.2 584,381 581,387 579,393 577,388 572,386 565,381 561,377.2" fill="#f2efe9"/>
<polygon points="608.3,397 612,396 615.2,402 611,404.7 608,401" fill="#f2efe9"/>
<polygon points="478.8,377 488,377 484,381 479,383" fill="#f2efe9"/>
<ellipse cx="555" cy="393.5" rx="1.2" ry="3" fill="#aad3df"/>
<polygon points="533.6,430.1 536,431 542,441 541.8,443 538,437" fill="#f2efe9"/>
<polygon points="574.8,443.4 581.1,444.1 587.5,447.2 586,448 580,445.5 575,444.6" fill="#f2efe9"/>
<polygon points="589,448.5 594,448.6 595,449.8 589.5,449.8" fill="#f2efe9"/>
<polygon points="579.2,481.8 579.8,473.2 581.1,464.4 584,461 590,458.5 594.8,459.7 601.9,460.9 607.8,464.4 613.8,468 618.5,471.6 623.3,475.1 630.4,478.7 633,481.8" fill="#f2efe9"/>
<polygon points="670.6,433 669.7,434.7 666.1,438.3 662.5,445.4 661.9,453.7 664.9,459.7 669.7,465.6 670.6,466" fill="#f2efe9"/>
<polyline points="517,400.5 556,400.5 560,399.5" fill="none" stroke="#d4b8c8" stroke-width="0.7"/>
<polyline points="585,407 590,405.5 595,404.5 597,403" fill="none" stroke="#d4b8c8" stroke-width="0.7"/>
<polyline points="535,428 548,431 556,436" fill="none" stroke="#d4b8c8" stroke-width="0.7"/>
<ellipse cx="587" cy="417" rx="14" ry="7.5" fill="url(#shd2)" transform="rotate(-40 587 417)"/>
<g transform="translate(563.8,393.6) scale(0.88)"><path d="M12.5,0.6 C5.8,0.6 0.6,6 0.6,12.8 C0.6,15.2 1.2,17.3 2.4,19.4 C5.5,25 10,31.5 12.5,40.8 C15,31.5 19.5,25 22.6,19.4 C23.8,17.3 24.4,15.2 24.4,12.8 C24.4,6 19.2,0.6 12.5,0.6 Z" fill="url(#mk)" stroke="#2a6fb0" stroke-width="0.8"/><circle cx="12.5" cy="13.2" r="4.4" fill="#fff"/></g>
</g></svg>
<div class="a" style="left:487.8px;top:387px;width:24px;height:48.4px;background:#fff;border-radius:3px;box-shadow:0 0 0 1.6px rgba(0,0,0,0.18);"></div>
<div class="a" style="left:487.8px;top:410.6px;width:24px;height:1px;background:#ccc;"></div>
<svg class="a" style="left:487.8px;top:387px" width="24" height="49" viewBox="0 0 24 49"><path d="M7.5 11.9H16.7M12.1 7.2V16.7" stroke="#000" stroke-width="1.7"/><path d="M7.8 36.2H17.3" stroke="#000" stroke-width="1.7"/></svg>
<div class="a" style="left:631px;top:467.6px;width:39.6px;height:14.2px;background:rgba(255,255,255,0.7);"></div>
<div class="t" style="left:635.5px;top:470.6px;font-size:10px;color:#0078a8;">Leaflet</div><!-- /bigmap -->
<!-- bottom -->
<div class="c" style="left:5px;top:361px;width:471px;height:34px;background:#d3d3d3;"></div>
<div class="t" style="left:2.5px;width:471px;text-align:center;top:373.6px;font-weight:bold;font-style:italic;font-size:10px;">Copyright © 2020 Henry George School of Social Science</div>
<div class="c" style="left:477px;top:361px;width:195px;height:138px;"></div>
<div class="c" style="left:5px;top:397px;width:471px;height:28px;background:#80c1eb;"></div>
<div class="t" style="left:7.6px;top:406.1px;font-weight:bold;font-size:10px;">Usage Guide</div>
<div class="c" style="left:5px;top:427px;width:471px;height:72px;background:#fbd9e2;"></div>
<div class="a" style="left:7.3px;top:446.8px;font-size:10px;line-height:10.9px;white-space:nowrap;">1. Enter State and County of Interest.<br>2. Tax Rate can be any value which suits the experimental view of the investigation.<br>3. Total Land Value and Land Tax are automatically computed.</div>

</div></body></html>
